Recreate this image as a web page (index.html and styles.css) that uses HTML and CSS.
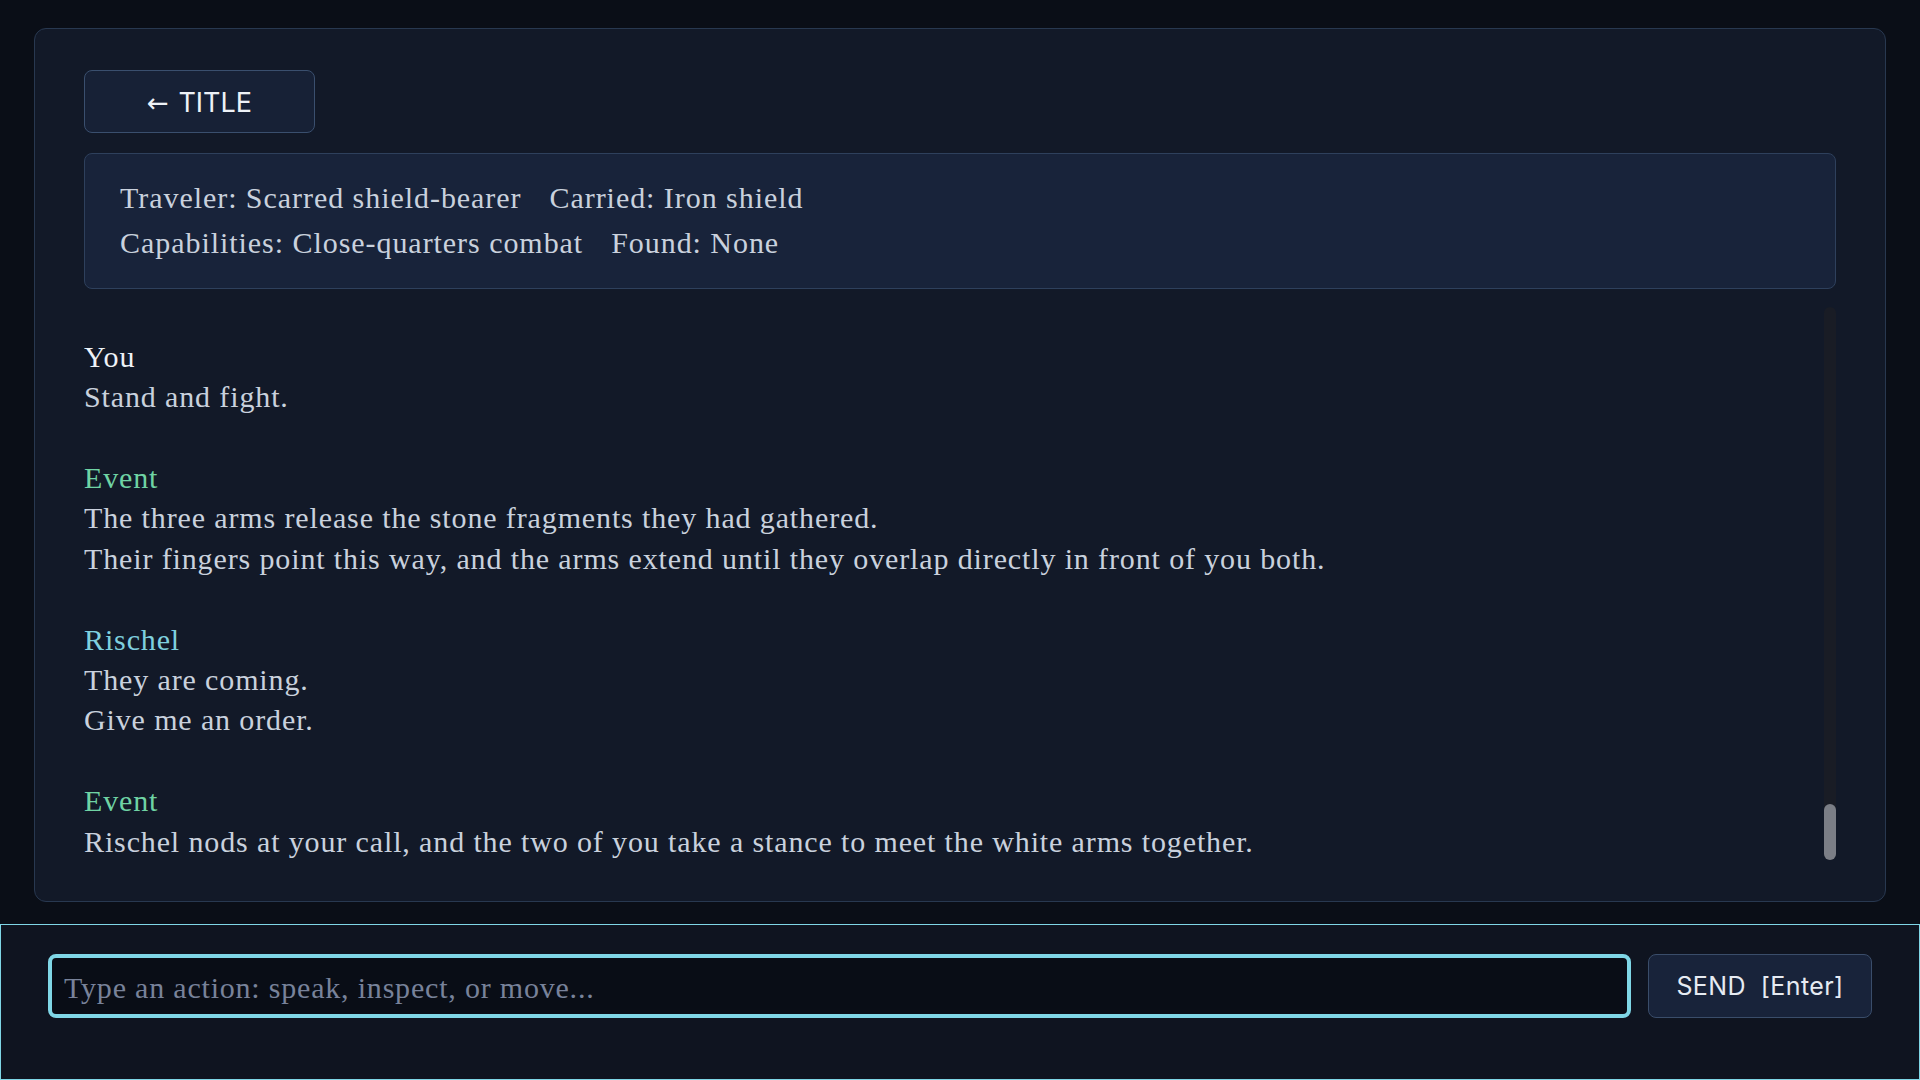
FILE: index.html
```html
<!DOCTYPE html>
<html lang="en">

<head>
    <meta charset="UTF-8">
    <meta name="viewport" content="width=device-width, initial-scale=1.0">
    <title>Journey</title>
    <link rel="stylesheet" href="styles.css">
</head>

<body>
    <!-- Main story panel -->
    <main class="game">
        <button class="back-btn"><span class="arrow">&larr;</span> TITLE</button>

        <div class="status">
            <p><span>Traveler: Scarred shield-bearer</span><span>Carried: Iron shield</span></p>
            <p><span>Capabilities: Close-quarters combat</span><span>Found: None</span></p>
        </div>

        <div class="log">
            <div class="messages">
                <div class="entry">
                    <div class="speaker you">You</div>
                    <div>Stand and fight.</div>
                </div>
                <div class="entry">
                    <div class="speaker event">Event</div>
                    <div>The three arms release the stone fragments they had gathered.</div>
                    <div>Their fingers point this way, and the arms extend until they overlap directly in front of you both.</div>
                </div>
                <div class="entry">
                    <div class="speaker ally">Rischel</div>
                    <div>They are coming.</div>
                    <div>Give me an order.</div>
                </div>
                <div class="entry">
                    <div class="speaker event">Event</div>
                    <div>Rischel nods at your call, and the two of you take a stance to meet the white arms together.</div>
                </div>
            </div>
            <div class="scroll-track">
                <div class="scroll-thumb"></div>
            </div>
        </div>
    </main>

    <!-- Command bar -->
    <footer class="command-bar">
        <input type="text" class="command-input" placeholder="Type an action: speak, inspect, or move..." autofocus>
        <button class="send-btn">SEND&nbsp;&nbsp;[Enter]</button>
    </footer>
</body>

</html>
```

FILE: styles.css
```css
html,
body {
    height: 100%;
}

body {
    margin: 0;
    background-color: #0a0e17;
    font-family: "Liberation Serif", "DejaVu Serif", serif;
    color: #c9d1dd;
    display: flex;
    flex-direction: column;
    overflow: hidden;
}

.game {
    height: 874px;
    box-sizing: border-box;
    margin: 28px 34px 22px;
    padding: 41px 49px 39px;
    background-color: #121928;
    border: 1px solid #283850;
    border-radius: 12px;
    display: flex;
    flex-direction: column;
}

.back-btn {
    width: 231px;
    height: 63px;
    flex-shrink: 0;
    padding-top: 3px;
    background-color: #172136;
    border: 1px solid #3a4f6e;
    border-radius: 8px;
    color: #eef2f7;
    font-family: Inter, "Noto Sans", sans-serif;
    font-size: 27px;
    cursor: pointer;
}

.back-btn .arrow {
    font-family: "DejaVu Sans", sans-serif;
    font-size: 26px;
    margin-right: 2px;
}

.status {
    margin-top: 20px;
    padding: 21px 35px 23px;
    background-color: #18233a;
    border: 1px solid #2e405c;
    border-radius: 8px;
    font-size: 30px;
    letter-spacing: 0.95px;
    line-height: 45px;
    color: #c9d1dd;
}

.status p {
    margin: 0;
}

.status span {
    margin-right: 28px;
}

/* Story log */
.log {
    flex: 1;
    min-height: 0;
    margin-top: 18px;
    display: flex;
    gap: 12px;
}

.messages {
    flex: 1;
    overflow: hidden;
    display: flex;
    flex-direction: column;
    justify-content: flex-end;
    font-size: 30px;
    letter-spacing: 0.87px;
    line-height: 40.4px;
}

.entry {
    margin-top: 40.4px;
}

.speaker.you {
    color: #eef2f7;
}

.speaker.event {
    color: #6fd3a4;
}

.speaker.ally {
    color: #7fd0df;
}

.scroll-track {
    width: 12px;
    margin-bottom: 2px;
    background-color: #191c25;
    border-radius: 6px;
    display: flex;
    flex-direction: column;
    justify-content: flex-end;
}

.scroll-thumb {
    height: 56px;
    background-color: #7b7e86;
    border-radius: 6px;
}

/* Command bar */
.command-bar {
    flex: 1;
    box-sizing: border-box;
    padding: 29px 47px 0 47px;
    background-color: #0f1420;
    border: 1px solid #7fd6e6;
    display: flex;
    align-items: flex-start;
    gap: 17px;
}

.command-input {
    flex: 1;
    height: 64px;
    box-sizing: border-box;
    padding: 3px 12px 0;
    background-color: #090d16;
    border: 4px solid #7fd6e6;
    border-radius: 8px;
    color: #e6ebf2;
    font-family: "Liberation Serif", "DejaVu Serif", serif;
    font-size: 30px;
    letter-spacing: 0.8px;
    outline: none;
    caret-color: #ffffff;
}

.command-input::placeholder {
    color: #78829a;
}

.send-btn {
    width: 224px;
    height: 64px;
    background-color: #18233a;
    border: 1px solid #3a4d6a;
    border-radius: 8px;
    color: #e6ebf2;
    font-family: Inter, "Noto Sans", sans-serif;
    font-size: 25px;
    letter-spacing: 0.4px;
    cursor: pointer;
}
```
